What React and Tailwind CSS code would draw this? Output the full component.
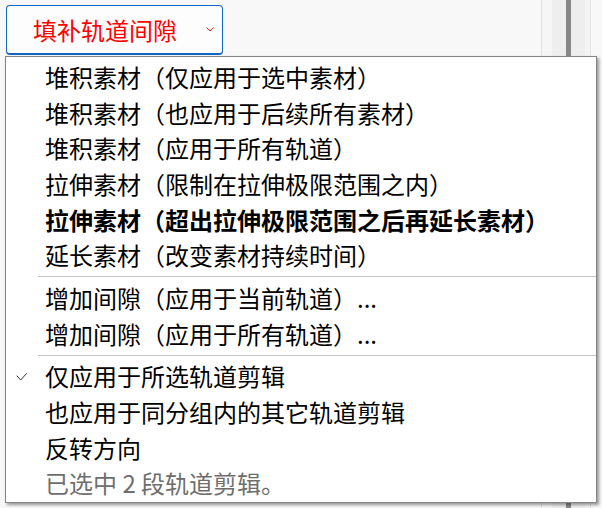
import React from "react";

const items1 = [
  { t: "堆积素材（仅应用于选中素材）" },
  { t: "堆积素材（也应用于后续所有素材）" },
  { t: "堆积素材（应用于所有轨道）" },
  { t: "拉伸素材（限制在拉伸极限范围之内）" },
  { t: "拉伸素材（超出拉伸极限范围之后再延长素材）", bold: true },
  { t: "延长素材（改变素材持续时间）" },
];
const items2 = [
  { t: "增加间隙（应用于当前轨道）..." },
  { t: "增加间隙（应用于所有轨道）..." },
];
const items3 = [
  { t: "仅应用于所选轨道剪辑", check: true },
  { t: "也应用于同分组内的其它轨道剪辑" },
  { t: "反转方向" },
  { t: "已选中 2 段轨道剪辑。", disabled: true },
];

function Row({ t, bold, check, disabled }) {
  return (
    <div className="h-[35.7px] flex items-center">
      <div className="w-[39px] h-full flex items-center">
        {check && (
          <svg width="12" height="10" viewBox="0 0 12 10" className="ml-[10px] mt-[1px]">
            <polyline points="0.7,3.7 4.7,8 10.7,1.3" fill="none" stroke="#333" strokeWidth="1" />
          </svg>
        )}
      </div>
      <span
        className={
          "leading-none whitespace-nowrap " +
          (bold ? "font-bold " : "") +
          (disabled ? "text-[#6e6e6e]" : "text-black")
        }
      >
        {t}
      </span>
    </div>
  );
}

function Sep() {
  return (
    <div className="h-[7px] flex items-center pl-[32px]">
      <div className="h-px w-full bg-[#c4c4c4]" />
    </div>
  );
}

export default function App() {
  return (
    <div className="w-[602px] h-[508px] bg-[#f8f8f8] relative overflow-hidden flex font-['Noto_Sans_CJK_SC','Noto_Sans',sans-serif]">
      <div className="w-[541px] pl-[6px] pt-[5px]">
        <div className="w-[217px] h-[50px] bg-[#fdfdfd] border border-b-2 border-[#1466c4] rounded-[4px] flex items-center justify-between pl-[26px] pr-[8px]">
          <span className="text-[24px] leading-none text-[#ff0000]">填补轨道间隙</span>
          <svg width="8" height="5" viewBox="0 0 8 5">
            <polyline points="0.5,0.5 4,4 7.5,0.5" fill="none" stroke="#ff2020" strokeWidth="1" />
          </svg>
        </div>
      </div>
      <div className="w-px bg-[#e2e2e2]" />
      <div className="w-[10px] bg-[#f6f6f6]" />
      <div className="w-[14px] bg-[#eeeeee]" />
      <div className="w-[5px] bg-[#878787]" />
      <div className="w-[14px] bg-[#eeeeee]" />
      <div className="w-[5px] bg-[#f4f4f4]" />
      <div className="w-px bg-[#e4e4e4]" />
      <div className="flex-1" />

      <div className="absolute left-[5px] top-[56px] w-[592px] h-[447px] bg-white border border-[#868686] shadow-[2px_2px_3px_rgba(0,0,0,0.4)] pt-[2px] text-[24px]">
        {items1.map((it, i) => (
          <Row key={"a" + i} {...it} />
        ))}
        <Sep />
        {items2.map((it, i) => (
          <Row key={"b" + i} {...it} />
        ))}
        <Sep />
        {items3.map((it, i) => (
          <Row key={"c" + i} {...it} />
        ))}
      </div>
    </div>
  );
}
